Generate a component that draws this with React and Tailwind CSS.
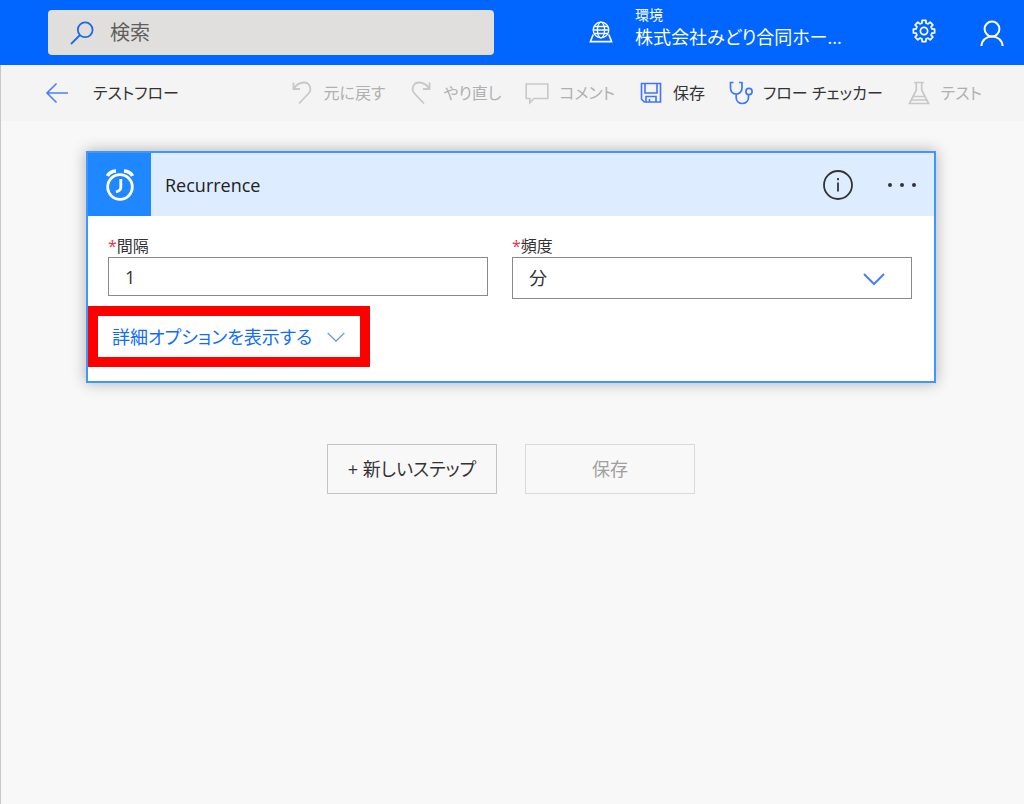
const SearchIcon = () => (
	<svg className="h-6 w-6 shrink-0 text-[#1f6ae0]" viewBox="0 0 24 24" fill="none" stroke="currentColor" strokeWidth="1.8">
		<circle cx="15.2" cy="8.8" r="7.4" />
		<path d="M10 14 L1 23" />
	</svg>
);

const EnvironmentIcon = () => (
	<svg className="h-6 w-6 shrink-0" viewBox="0 0 24 24" fill="none" stroke="currentColor" strokeWidth="1.3">
		<circle cx="12" cy="9" r="7.8" />
		<ellipse cx="12" cy="9" rx="3.6" ry="7.8" />
		<path d="M4.2 9h15.6M5.2 5.5h13.6M5.2 12.5h13.6" />
		<path d="M4.2 13.5 L1.4 20.6 H22.6 L19.8 13.5" strokeWidth="1.6" />
	</svg>
);

const gearTeeth = [0, 45, 90, 135, 180, 225, 270, 315];

const GearIcon = () => (
	<svg className="h-6 w-6" viewBox="0 0 24 24" fill="none" stroke="currentColor" strokeWidth="1.7" strokeLinejoin="round">
		{gearTeeth.map((angle) => (
			<path
				key={angle}
				transform={`rotate(${angle} 12 12)`}
				d="M8.9 4.5 9.9 4.1 10.1 1.4h3.8l.2 2.7 1 .4"
			/>
		))}
		<circle cx="12" cy="12" r="3.6" />
	</svg>
);

const PersonIcon = () => (
	<svg className="h-7 w-7" viewBox="0 0 28 28" fill="none" stroke="currentColor" strokeWidth="2">
		<circle cx="14" cy="10" r="7.4" />
		<path d="M3.4 27c.5-6 4.9-9.6 10.6-9.6s10.1 3.6 10.6 9.6" />
	</svg>
);

const BackIcon = () => (
	<svg className="h-6 w-6" viewBox="0 0 24 24" fill="none" stroke="currentColor" strokeWidth="1.6">
		<path d="M11.5 2.5 2 12l9.5 9.5M2 12h21" />
	</svg>
);

const UndoIcon = () => (
	<svg className="h-6 w-6" viewBox="0 0 24 24" fill="none" stroke="currentColor" strokeWidth="1.8">
		<path d="M3.5 1.5v6.500h6.500M3.5 8C6.500 3 10.500 1.500 14 1.500c5.500 0 8.500 6.500 4.500 11L9 22.500" />
	</svg>
);

const RedoIcon = () => (
	<svg className="h-6 w-6" viewBox="0 0 24 24" fill="none" stroke="currentColor" strokeWidth="1.8">
		<path d="M20.500 1.500v6.500H14M20.500 8C17.500 3 13.500 1.500 10 1.500c-5.500 0-8.500 6.500-4.500 11L15 22.500" />
	</svg>
);

const CommentIcon = () => (
	<svg className="h-6 w-6" viewBox="0 0 24 24" fill="none" stroke="currentColor" strokeWidth="1.6">
		<path d="M1.2 3h21.6v14.500H9L4.800 21.700v-4.200H1.200z" />
	</svg>
);

const SaveIcon = () => (
	<svg className="h-6 w-6" viewBox="0 0 24 24" fill="none" stroke="currentColor" strokeWidth="1.6">
		<path d="M2.5 2.500h19v18.500H5.300L2.500 18.200zM6 2.500V12h12V2.500M7 21v-5.500h10V21M10.500 18v3" />
	</svg>
);

const CheckerIcon = () => (
	<svg className="h-6 w-6" viewBox="0 0 24 24" fill="none" stroke="currentColor" strokeWidth="1.7">
		<path d="M4.500 1.500H1.500V7c0 3.500 2.500 6 5.700 6S13 10.500 13 7V1.500h-3" />
		<path d="M7.200 13v3.500c0 3.500 2.600 6 6 6s6.300-2.500 6.300-6V14" />
		<circle cx="20" cy="10.500" r="3.100" />
	</svg>
);

const FlaskIcon = () => (
	<svg className="h-6 w-6" viewBox="0 0 24 24" fill="none" stroke="currentColor" strokeWidth="1.7">
		<path d="M7 1.500h10M9.300 1.500v7.500L2.500 22.500h19L14.700 9V1.500M6 15.500h12M4.200 19h15.600" />
	</svg>
);

const AlarmIcon = () => (
	<svg className="h-8 w-8" viewBox="0 0 32 32" fill="none" stroke="currentColor">
		<circle cx="16" cy="18" r="12.3" strokeWidth="2.8" />
		<path d="M16.800 10v8.500c0 2-1.500 3.500-4.800 4.500" strokeWidth="2.8" />
		<path d="M3.500 7C5 4 8 2.200 12 2M28.500 7C27 4 24 2.200 20 2" strokeWidth="3.6" />
	</svg>
);

const InfoIcon = () => (
	<svg className="h-8 w-8" viewBox="0 0 32 32" fill="none" stroke="currentColor" strokeWidth="1.8">
		<circle cx="16" cy="16" r="14" />
		<path d="M16 13.500v9M16 9v2.200" />
	</svg>
);

const MoreIcon = () => (
	<svg className="h-8 w-8" viewBox="0 0 32 32" fill="currentColor">
		<circle cx="4" cy="16" r="2" />
		<circle cx="16" cy="16" r="2" />
		<circle cx="28" cy="16" r="2" />
	</svg>
);

const ChevronIcon = ({ className }) => (
	<svg className={className} viewBox="0 0 24 24" fill="none" stroke="currentColor">
		<path d="M2 7l10 10L22 7" />
	</svg>
);

const commands = [
	{ label: '元に戻す', icon: <UndoIcon />, disabled: true },
	{ label: 'やり直し', icon: <RedoIcon />, disabled: true },
	{ label: 'コメント', icon: <CommentIcon />, disabled: true },
	{ label: '保存', icon: <SaveIcon /> },
	{ label: 'フロー チェッカー', icon: <CheckerIcon /> },
	{ label: 'テスト', icon: <FlaskIcon />, disabled: true },
];

const App = () => {
	return (
		<div className="flex min-h-screen flex-col bg-[#f8f8f8] font-['Open_Sans','Noto_Sans_CJK_JP',sans-serif] text-[#333] [font-feature-settings:'palt']">
			<header className="flex h-[65px] items-center bg-[#0066ff] pr-[18px] pl-12 text-white">
				<label className="flex h-[45px] w-[446px] items-center gap-4 rounded bg-[#e1dfdd] pl-[22px]">
					<SearchIcon />
					<input
						type="search"
						aria-label="検索"
						placeholder="検索"
						className="min-w-0 flex-1 bg-transparent text-xl text-[#333] outline-none placeholder:text-[#605e5c]"
					/>
				</label>
				<button className="ml-[95px] flex items-center gap-[22px] pb-1 text-left">
					<span className="pt-1">
						<EnvironmentIcon />
					</span>
					<span className="flex flex-col pb-2">
						<span className="text-sm leading-5">環境</span>
						<span className="text-lg leading-6">株式会社みどり合同ホー...</span>
					</span>
				</button>
				<div className="ml-auto flex items-center gap-[42px]">
					<button aria-label="設定" className="pb-1">
						<GearIcon />
					</button>
					<button aria-label="アカウント">
						<PersonIcon />
					</button>
				</div>
			</header>

			<div className="flex flex-1 flex-col border-l border-[#c8c8c8]">
				<nav className="flex h-14 items-center justify-between bg-[#f4f4f4] pr-[42px] pl-11 text-base">
					<div className="flex items-center gap-6">
						<button aria-label="戻る" className="text-[#4f7dff]">
							<BackIcon />
						</button>
						<h1>テストフロー</h1>
					</div>
					<div className="flex items-center gap-6">
						{commands.map((command) => (
							<button
								key={command.label}
								disabled={command.disabled}
								className="flex items-center gap-2.5 whitespace-nowrap disabled:text-[#b0b0b0]"
							>
								<span className={command.disabled ? 'text-[#c8c8c8]' : 'text-[#3f74ff]'}>{command.icon}</span>
								{command.label}
							</button>
						))}
					</div>
				</nav>

				<main className="pt-[30px] pr-[88px] pl-[85px]">
					<section className="border-2 border-[#3c97ff] bg-white shadow-[0_0_14px_rgba(0,0,0,0.3)]">
						<div className="flex h-[63px] items-center bg-[#deecff] pr-4">
							<div className="flex h-[63px] w-[63px] items-center justify-center bg-[#1f87ff] text-white">
								<AlarmIcon />
							</div>
							<h2 className="pl-3.5 text-lg text-[#222]">Recurrence</h2>
							<div className="ml-auto flex gap-8">
								<button aria-label="情報">
									<InfoIcon />
								</button>
								<button aria-label="メニュー">
									<MoreIcon />
								</button>
							</div>
						</div>

						<div className="flex gap-6 pt-5 pr-[22px] pl-5">
							<div className="flex-[19]">
								<label htmlFor="interval" className="flex text-base leading-[21px]">
									<span className="text-[#e8304a]">*</span>
									間隔
								</label>
								<input
									id="interval"
									defaultValue="1"
									className="h-[39px] w-full border border-[#8a8a8a] px-4 text-lg outline-none"
								/>
							</div>
							<div className="flex-[20]">
								<label htmlFor="frequency" className="flex text-base leading-[21px]">
									<span className="text-[#e8304a]">*</span>
									頻度
								</label>
								<div className="relative">
									<select
										id="frequency"
										className="block h-[42px] w-full appearance-none border border-[#8a8a8a] bg-white px-4 text-lg outline-none"
									>
										<option>分</option>
									</select>
									<ChevronIcon className="pointer-events-none absolute top-2.5 right-[26px] h-6 w-6 stroke-2 text-[#4a7dff]" />
								</div>
							</div>
						</div>

						<button className="mt-[7px] mb-3.5 flex h-[61px] items-center gap-3.5 border-[10px] border-[#ff0000] px-3.5 text-lg text-[#0f6cff]">
							詳細オプションを表示する
							<ChevronIcon className="h-5 w-5 stroke-[1.5] text-[#5c8de8]" />
						</button>
					</section>

					<div className="flex justify-center gap-7 pt-[61px] text-lg">
						<button className="h-[50px] w-[170px] border border-[#c4c4c4]">+ 新しいステップ</button>
						<button disabled className="h-[50px] w-[170px] border border-[#dadada] text-[#a0a0a0]">
							保存
						</button>
					</div>
				</main>
			</div>
		</div>
	);
};

export default App;
